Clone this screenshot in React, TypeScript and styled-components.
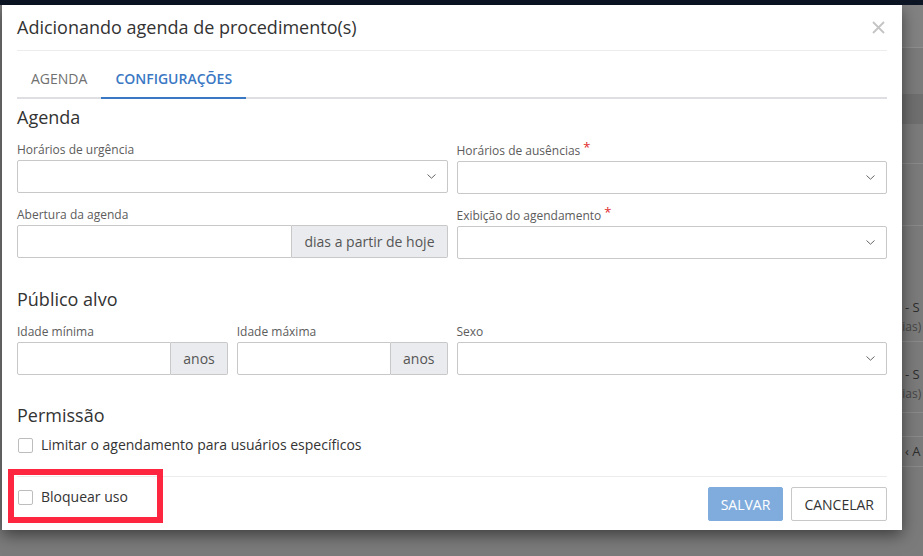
import React from "react";
import styled, { createGlobalStyle } from "styled-components";

const GlobalStyle = createGlobalStyle`
    html, body {
        margin: 0;
        padding: 0;
        background: #7b7b7b;
    }
    body {
        font-family: "Open Sans", "Noto Sans", Arial, sans-serif;
        color: #333;
    }
    * {
        box-sizing: border-box;
    }
`;

const Screen = styled.div`
    position: relative;
    width: 923px;
    height: 556px;
    overflow: hidden;
    display: flex;
    flex-direction: column;
    background: #7b7b7b;
`;

const TopBar = styled.div`
    height: 5px;
    flex-shrink: 0;
    background: #0b1524;
`;

/* the page behind the dialog, only a thin strip of it shows on the right */
const BackPage = styled.div`
    flex: 1;
    display: flex;
    flex-direction: column;
    padding-left: 902px;
`;

const BackRow = styled.div`
    height: ${props => props.h}px;
    flex-shrink: 0;
    background: ${props => props.bg || "transparent"};
    border-bottom: ${props => props.line ? `1px solid ${props.line}` : "none"};
    display: flex;
    flex-direction: column;
    justify-content: ${props => props.pad !== undefined ? "flex-start" : "center"};
    padding: ${props => props.pad || 0}px 0 0 3px;
    white-space: nowrap;
`;

const BackStrong = styled.span`
    font-size: 13px;
    line-height: 19px;
    color: #2d2d2d;
`;

const BackSmall = styled.span`
    font-size: 12px;
    line-height: 19px;
    color: #474747;
    margin-left: -10px;
`;

const Modal = styled.div`
    position: absolute;
    top: 5px;
    left: 2px;
    width: 900px;
    background: #fff;
    box-shadow: 0 5px 15px rgba(0, 0, 0, 0.5);
    display: flex;
    flex-direction: column;
`;

const Header = styled.div`
    margin: 0 15px;
    height: 46px;
    display: flex;
    align-items: center;
    justify-content: space-between;
    border-bottom: 1px solid #ececec;
`;

const Title = styled.h4`
    margin: 0;
    font-size: 18px;
    line-height: 25px;
    font-weight: 400;
    color: #333;
`;

const CloseButton = styled.button`
    border: none;
    background: none;
    padding: 0;
    margin-right: 2px;
    width: 13px;
    height: 13px;
    display: flex;
    cursor: pointer;
`;

const Tabs = styled.div`
    margin: 10px 15px 0;
    display: flex;
    border-bottom: 2px solid #dedee3;
`;

const Tab = styled.div`
    height: 38px;
    margin-bottom: -2px;
    padding: 0 14px 1px;
    display: flex;
    align-items: center;
    font-size: 14px;
    text-transform: uppercase;
    font-weight: ${props => props.active ? 600 : 400};
    color: ${props => props.active ? "#3a78c4" : "#707070"};
    border-bottom: 2px solid ${props => props.active ? "#3a78c4" : "transparent"};
`;

const Body = styled.div`
    padding: 0 15px 21px;
`;

const SectionTitle = styled.h3`
    margin: ${props => props.gap}px 0 0;
    font-size: 18px;
    line-height: 25px;
    font-weight: 400;
    color: #333;
`;

const FieldGrid = styled.div`
    margin-top: 11px;
    display: grid;
    grid-template-columns: repeat(4, 1fr);
    column-gap: 9px;
    row-gap: 12px;
`;

const Field = styled.div`
    grid-column: span ${props => props.span || 1};
    display: flex;
    flex-direction: column;
    min-width: 0;
`;

const Label = styled.label`
    font-size: 12px;
    line-height: 17px;
    font-weight: 500;
    color: #5c5c5c;
    margin-bottom: 2px;
`;

const Required = styled.span`
    color: #e02a2a;
    margin-left: 3px;
    font-size: 13px;
    vertical-align: 3px;
    line-height: 1;
`;

const SelectBox = styled.div`
    height: 33px;
    border: 1px solid #c8c8c8;
    border-radius: 2px;
    background: #fff;
    display: flex;
    align-items: center;
    justify-content: flex-end;
    padding: 0 11px;
`;

const InputGroup = styled.div`
    height: 33px;
    display: flex;
`;

const TextInput = styled.div`
    flex: 1;
    border: 1px solid #c8c8c8;
    border-radius: 2px 0 0 2px;
    background: #fff;
`;

const Addon = styled.div`
    display: flex;
    align-items: center;
    padding: 0 12px;
    border: 1px solid #c8c8c8;
    border-left: none;
    border-radius: 0 2px 2px 0;
    background: #eaebee;
    color: #555;
    font-size: 14px;
    white-space: nowrap;
`;

const CheckRow = styled.label`
    display: flex;
    align-items: center;
    gap: 8px;
    margin-top: ${props => props.top || 0}px;
    padding-left: 1px;
    font-size: 14px;
    line-height: 20px;
    color: #333;
`;

const CheckBox = styled.span`
    width: 15px;
    height: 15px;
    border: 1px solid #bdbdbd;
    border-radius: 2px;
    background: #fff;
`;

const Footer = styled.div`
    margin: 0 15px;
    padding: 10px 0 9px;
    border-top: 1px solid #ececec;
    display: flex;
    justify-content: space-between;
    align-items: flex-start;
`;

const Buttons = styled.div`
    display: flex;
    gap: 8px;
`;

const Button = styled.button`
    height: 34px;
    padding: 0 12px;
    font-family: inherit;
    font-size: 14px;
    border-radius: 2px;
    border: 1px solid ${props => props.primary ? "#80acdd" : "#c8c8c8"};
    background: ${props => props.primary ? "#80acdd" : "#fff"};
    color: ${props => props.primary ? "#fff" : "#333"};
`;

const Highlight = styled.div`
    position: absolute;
    left: 8px;
    top: 469px;
    width: 155px;
    height: 54px;
    border: 6px solid #fe2541;
    pointer-events: none;
`;

const Chevron = () => (
    <svg width="9" height="5" viewBox="0 0 9 5">
        <path d="M0.5 0.5 L4.5 4.2 L8.5 0.5" fill="none" stroke="#666" strokeWidth="1" />
    </svg>
);

const CloseIcon = () => (
    <svg width="13" height="13" viewBox="0 0 13 13">
        <path d="M1 1 L12 12 M12 1 L1 12" stroke="#c4c4c4" strokeWidth="1.8" />
    </svg>
);

const Select = () => (
    <SelectBox>
        <Chevron />
    </SelectBox>
);

const App = () => (
    <>
        <GlobalStyle />
        <Screen>
            <TopBar />
            <BackPage>
                <BackRow h={43} bg="#828282" line="#8e8e8e" />
                <BackRow h={46} />
                <BackRow h={30} bg="#6f6f6f" />
                <BackRow h={40} line="#8a8a8a" />
                <BackRow h={62} line="#8a8a8a" />
                <BackRow h={116} line="#8a8a8a" pad={72}>
                    <BackStrong>- S</BackStrong>
                    <BackSmall>dias)</BackSmall>
                </BackRow>
                <BackRow h={71} line="#8a8a8a" pad={23}>
                    <BackStrong>- S</BackStrong>
                    <BackSmall>dias)</BackSmall>
                </BackRow>
                <BackRow h={24} line="#8a8a8a" />
                <BackRow h={30} line="#8a8a8a">
                    <BackStrong>‹ A</BackStrong>
                </BackRow>
            </BackPage>

            <Modal>
                <Header>
                    <Title>Adicionando agenda de procedimento(s)</Title>
                    <CloseButton aria-label="Fechar"><CloseIcon /></CloseButton>
                </Header>
                <Tabs>
                    <Tab>Agenda</Tab>
                    <Tab active>Configurações</Tab>
                </Tabs>
                <Body>
                    <SectionTitle gap={6}>Agenda</SectionTitle>
                    <FieldGrid>
                        <Field span={2}>
                            <Label>Horários de urgência</Label>
                            <Select />
                        </Field>
                        <Field span={2}>
                            <Label>Horários de ausências<Required>*</Required></Label>
                            <Select />
                        </Field>
                        <Field span={2}>
                            <Label>Abertura da agenda</Label>
                            <InputGroup>
                                <TextInput />
                                <Addon>dias a partir de hoje</Addon>
                            </InputGroup>
                        </Field>
                        <Field span={2}>
                            <Label>Exibição do agendamento<Required>*</Required></Label>
                            <Select />
                        </Field>
                    </FieldGrid>

                    <SectionTitle gap={28}>Público alvo</SectionTitle>
                    <FieldGrid>
                        <Field>
                            <Label>Idade mínima</Label>
                            <InputGroup>
                                <TextInput />
                                <Addon>anos</Addon>
                            </InputGroup>
                        </Field>
                        <Field>
                            <Label>Idade máxima</Label>
                            <InputGroup>
                                <TextInput />
                                <Addon>anos</Addon>
                            </InputGroup>
                        </Field>
                        <Field span={2}>
                            <Label>Sexo</Label>
                            <Select />
                        </Field>
                    </FieldGrid>

                    <SectionTitle gap={28}>Permissão</SectionTitle>
                    <CheckRow top={7}>
                        <CheckBox />
                        Limitar o agendamento para usuários específicos
                    </CheckRow>
                </Body>
                <Footer>
                    <CheckRow>
                        <CheckBox />
                        Bloquear uso
                    </CheckRow>
                    <Buttons>
                        <Button primary>SALVAR</Button>
                        <Button>CANCELAR</Button>
                    </Buttons>
                </Footer>
            </Modal>
            <Highlight />
        </Screen>
    </>
);

export default App;
